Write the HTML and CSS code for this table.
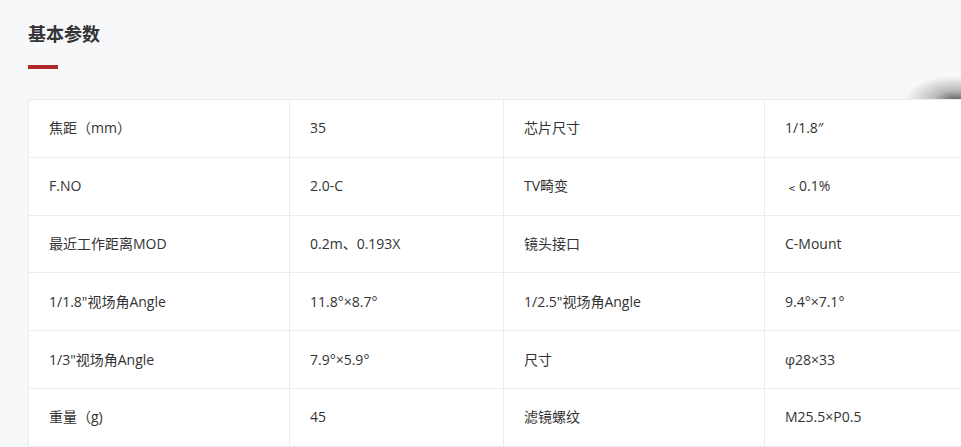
FILE: index.html
```html
<!DOCTYPE html>
<html lang="zh-CN">
<head>
<meta charset="utf-8">
<title>基本参数</title>
<link rel="stylesheet" href="styles.css">
</head>
<body>
<div class="page">
  <h2 class="title">基本参数</h2>
  <div class="title-bar"></div>
  <div class="float-shadow"></div>
  <table class="params">
    <colgroup>
      <col class="c1"><col class="c2"><col class="c3"><col class="c4">
    </colgroup>
    <tbody>
      <tr><td>焦距（mm）</td><td>35</td><td>芯片尺寸</td><td>1/1.8″</td></tr>
      <tr><td>F.NO</td><td>2.0-C</td><td>TV畸变</td><td>﹤0.1%</td></tr>
      <tr><td>最近工作距离MOD</td><td>0.2m、0.193X</td><td>镜头接口</td><td>C-Mount</td></tr>
      <tr><td>1/1.8"视场角Angle</td><td>11.8°×8.7°</td><td>1/2.5"视场角Angle</td><td>9.4°×7.1°</td></tr>
      <tr><td>1/3"视场角Angle</td><td>7.9°×5.9°</td><td>尺寸</td><td>φ28×33</td></tr>
      <tr><td>重量（g)</td><td>45</td><td>滤镜螺纹</td><td>M25.5×P0.5</td></tr>
    </tbody>
  </table>
</div>
</body>
</html>
```
FILE: styles.css
```css
html, body {
  margin: 0;
  padding: 0;
  background: #f7f8fa;
}
body {
  font-family: "Open Sans", "Noto Sans CJK SC", sans-serif;
  color: #333;
  overflow: hidden;
}
.page {
  position: relative;
  padding: 20px 0 0 28px;
  height: 447px;
  box-sizing: border-box;
  overflow: hidden;
}
.title {
  margin: 0;
  font-family: "Noto Sans CJK SC", sans-serif;
  font-size: 18px;
  line-height: 26px;
  font-weight: 700;
  color: #333;
}
.title-bar {
  width: 30px;
  height: 4px;
  margin-top: 19px;
  background: #b0282a;
}
.params {
  position: relative;
  z-index: 1;
  margin-top: 30px;
  width: 933px;
  border-collapse: collapse;
  table-layout: fixed;
  background: #fff;
}
.params col.c1 { width: 261px; }
.params col.c2 { width: 214px; }
.params col.c3 { width: 261px; }
.params col.c4 { width: 197px; }
.params td {
  height: 56.8px;
  padding: 0 0 0 20px;
  border: 1px solid #ececec;
  font-size: 14px;
  line-height: 20px;
  color: #333;
  white-space: nowrap;
  vertical-align: middle;
}
.float-shadow {
  position: absolute;
  z-index: 0;
  left: 900px;
  top: 74px;
  width: 61px;
  height: 50px;
  background: radial-gradient(ellipse 50px 24px at 55px 26px, rgba(70,70,70,0.85) 0%, rgba(110,110,110,0.45) 40%, rgba(247,248,250,0) 100%);
  pointer-events: none;
}
```
